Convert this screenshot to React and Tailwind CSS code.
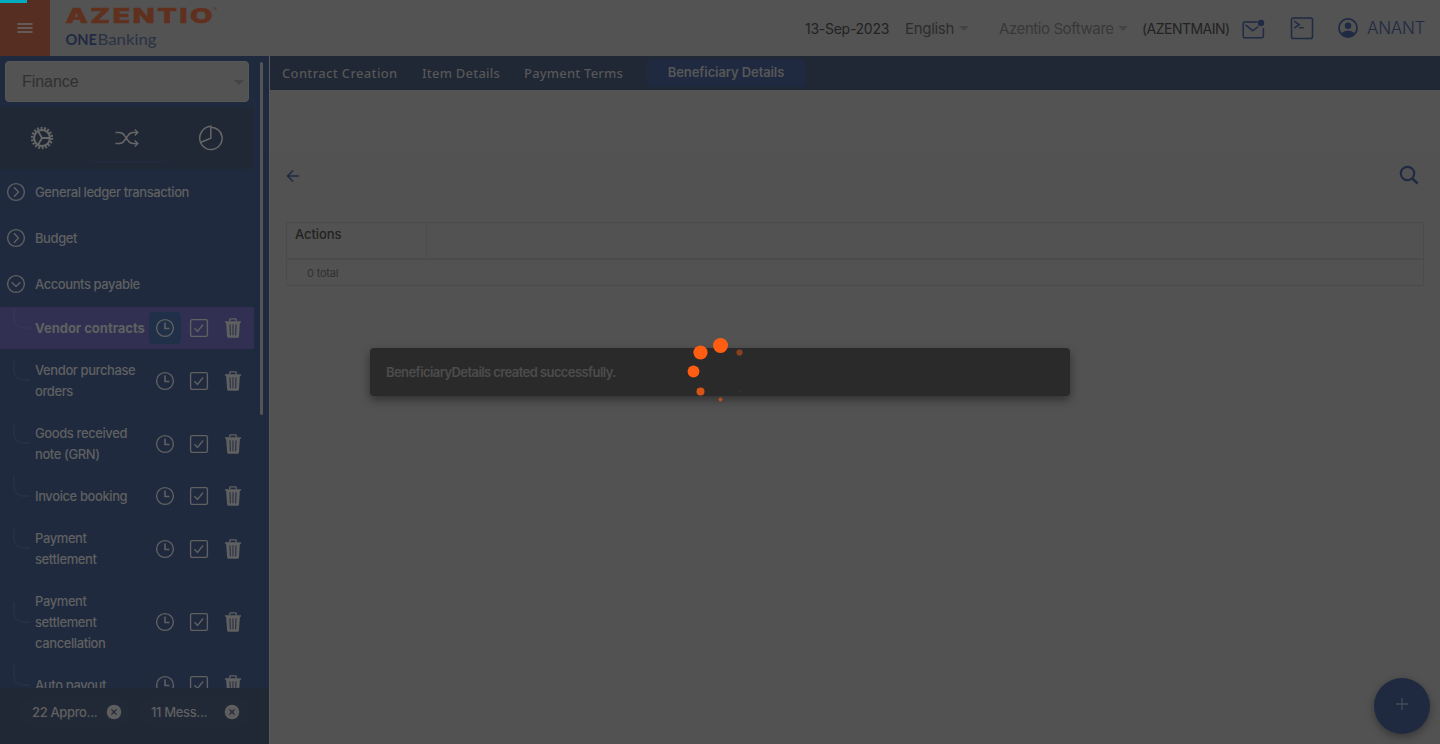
import React from "react";

const ITEMS = [
  { label: "Vendor contracts", active: true },
  { label: "Vendor purchase orders" },
  { label: "Goods received note (GRN)" },
  { label: "Invoice booking" },
  { label: "Payment settlement" },
  { label: "Payment settlement cancellation" },
  { label: "Auto payout" },
];

function Caret({ className }) {
  return (
    <svg width="10" height="5" viewBox="0 0 10 5" className={className}>
      <path d="M0 0h10L5 5z" fill="currentColor" />
    </svg>
  );
}

function Clock() {
  return (
    <svg width="20" height="20" viewBox="0 0 20 20" fill="none" stroke="currentColor" strokeWidth="1.4">
      <circle cx="10" cy="10" r="8.4" />
      <path d="M10 4.5v6h4.5" strokeWidth="1.6" />
    </svg>
  );
}

function Check() {
  return (
    <svg width="20" height="20" viewBox="0 0 20 20" fill="none" stroke="currentColor" strokeWidth="1.4">
      <rect x="1.6" y="1.6" width="16.8" height="16.8" rx="1.6" />
      <path d="M5.5 10.2l3 3.3 5.6-7" />
    </svg>
  );
}

function Trash() {
  return (
    <svg width="18" height="20" viewBox="0 0 18 20" fill="none">
      <path d="M1 3.2h16v1.500h-1.100L15 18.200q-.1 1.600-1.600 1.600H4.700q-1.500 0-1.600-1.600L2.100 4.700H1z" fill="currentColor" />
      <path d="M5.800 3.300V1.600q0-.7.7-.7h5q.7 0 .7.7v1.700" stroke="currentColor" strokeWidth="1.400" />
      <path d="M6 6.300l.3 11M9 6.300v11M12 6.300l-.3 11" stroke="#202a3f" strokeWidth="1" />
    </svg>
  );
}

function Group({ label, open }) {
  return (
    <div className="flex h-[46px] shrink-0 items-center pl-[6px]">
      <svg width="20" height="20" viewBox="0 0 20 20" fill="none" stroke="currentColor" strokeWidth="1.4">
        <circle cx="10" cy="10" r="8.4" />
        {open ? <path d="M5.500 8.200L10 12.200l4.500-4" /> : <path d="M8 5.300l4.500 4.700L8 14.700" />}
      </svg>
      <span className="ml-[9px] pt-px text-[13px] font-medium tracking-[-0.42px]">{label}</span>
    </div>
  );
}

function Item({ label, active }) {
  return (
    <div className={"flex w-[254px] shrink-0 items-center py-[10.5px] " + (active ? "bg-[#313053]" : "")}>
      <div className={"ml-[13px] mr-[5px] h-[21px] w-[17px] -translate-y-[10px] rounded-bl-[10px] border-b-2 border-l-2 " + (active ? "border-[#363456]" : "border-[#263044]")} />
      <div
        className={
          "w-[113px] text-[13px] leading-[21px] " +
          (active ? "whitespace-nowrap font-bold tracking-[-0.01px]" : "pr-[6px] font-medium tracking-[-0.4px]")
        }
      >
        {label}
      </div>
      <div className="-my-2 ml-px flex items-center">
        <span className={"flex size-8 items-center justify-center rounded-[4px] " + (active ? "bg-[#213049]" : "")}>
          <Clock />
        </span>
        <span className="ml-2 mr-[15px] flex"><Check /></span>
        <Trash />
      </div>
    </div>
  );
}

function Chip({ label, className }) {
  return (
    <div className={"flex h-8 items-center rounded-full bg-[#212937] " + className}>
      <span className="pt-px text-[13px] font-medium tracking-[-0.35px]">{label}</span>
      <svg width="16" height="16" viewBox="0 0 16 16" className="ml-auto">
        <circle cx="8" cy="8" r="7.300" fill="#5e5e5e" />
        <path d="M5.400 5.400l5.200 5.200M10.600 5.400l-5.200 5.200" stroke="#202735" strokeWidth="1.3" />
      </svg>
    </div>
  );
}

function Gear() {
  return (
    <svg width="24" height="24" viewBox="-12 -12 24 24" fill="none" stroke="currentColor">
      <circle r="10" strokeWidth="2.400" strokeDasharray="1.900 1.591" />
      <circle r="8" strokeWidth="2.200" />
      <path d="M0 0H8M0 0L-4 -7M0 0L-4 7" strokeWidth="1.800" />
    </svg>
  );
}

export default function App() {
  return (
    <div className="relative flex h-[744px] w-[1440px] flex-col overflow-hidden bg-[#525252] font-['Inter',sans-serif]">
      <header className="flex h-14 shrink-0 items-center bg-[#535353]">
        <div className="flex h-14 w-[50px] items-center justify-center bg-[#572e22] text-[#6a6a6a]">
          <svg width="16" height="12" viewBox="0 0 16 12" stroke="currentColor" strokeWidth="1.500" strokeLinecap="round">
            <path d="M1 2h14M1 6h14M1 10h14" />
          </svg>
        </div>
        <svg width="160" height="56" viewBox="0 0 160 56" className="ml-[10px]">
          <text transform="translate(5.500 22.800) scale(1.420 1)" textLength="103.500" lengthAdjust="spacing" fill="#60301f" stroke="#60301f" strokeWidth="0.600" fontFamily="Inter" fontWeight="800" fontSize="20.500">AZENTIO</text>
          <text x="152" y="10" textLength="5" lengthAdjust="spacingAndGlyphs" fill="#60301f" fontFamily="Inter" fontSize="3.500">TM</text>
          <text x="5.500" y="45" textLength="31.500" lengthAdjust="spacingAndGlyphs" fill="#202a43" fontFamily="Lato" fontWeight="700" fontSize="15.500">ONE</text>
          <text x="37.500" y="45" textLength="59" lengthAdjust="spacingAndGlyphs" fill="#2a3243" fontFamily="Lato" fontSize="16">Banking</text>
        </svg>
        <div className="ml-auto flex items-center whitespace-nowrap">
          <span className="w-[100px] text-[14px] tracking-[-0.27px] text-[#222]">13-Sep-2023</span>
          <span className="w-[55px] pt-0.5 text-[15px] tracking-[-0.3px] text-[#2c2c2c]">English</span>
          <Caret className="-ml-px mr-[30px] mt-px text-[#444]" />
          <span className="w-[120px] pt-0.5 text-[15px] tracking-[-0.42px] text-[#383838]">Azentio Software</span>
          <Caret className="-ml-px mr-[14px] mt-px text-[#444]" />
          <span className="w-[100px] text-[14px] tracking-[-0.52px] text-[#222]">(AZENTMAIN)</span>
          <svg width="24" height="22" viewBox="0 0 24 22" fill="none" stroke="#202a43" strokeWidth="1.500" className="mr-[24px] translate-y-px">
            <path d="M15.500 4H2.800Q1.200 4 1.200 5.600v12.600q0 1.600 1.600 1.600h17q1.600 0 1.600-1.600V10" />
            <path d="M3.500 6.800l7.300 6 5.400-4.300" />
            <circle cx="19" cy="5" r="3.200" fill="#202a43" stroke="none" />
          </svg>
          <svg width="24" height="24" viewBox="0 0 24 24" fill="none" stroke="#202a43" strokeWidth="1.500" className="mr-[23px]">
            <rect x="1.500" y="2" width="21" height="20.500" rx="1.800" />
            <path d="M4.200 5.200l5 3.500-5 3.500M9.200 11.700h4.500" />
          </svg>
          <svg width="22" height="22" viewBox="0 0 22 22" className="mr-[8px]">
            <circle cx="11" cy="11" r="9.100" fill="none" stroke="#202a43" strokeWidth="1.700" />
            <circle cx="11" cy="8.800" r="3.300" fill="#202a43" />
            <path d="M4.500 16.300q2.500-2.800 6.500-2.800t6.500 2.800q-2.500 3.200-6.500 3.200t-6.500-3.200z" fill="#202a43" />
          </svg>
          <span className="w-[73px] pt-0.5 text-[17px] font-light tracking-[-0.3px] text-[#202a43]">ANANT</span>
        </div>
      </header>

      <div className="flex min-h-0 flex-1">
        <aside className="relative flex w-[270px] shrink-0 flex-col border-r border-[#5a5a5a] bg-[#1f2a3f] text-[#606060]">
          <div className="ml-[5px] mt-[5px] flex h-[41px] w-[244px] shrink-0 items-center justify-between rounded-[4px] border border-[#585858] bg-[#535353] pl-4 pr-1 text-[#303030]">
            <span className="font-['Liberation_Sans',sans-serif] text-[16px] tracking-[-0.05px]">Finance</span>
            <Caret className="mt-px text-[#444]" />
          </div>
          <div className="mt-[5px] flex h-[62px] w-[254px] shrink-0 bg-[#202735] text-[#666]">
            <div className="flex flex-1 items-center justify-center"><Gear /></div>
            <div className="flex flex-1 items-center justify-center">
              <div className="flex h-full w-[76px] flex-col items-center justify-center">
                <svg width="24" height="20" viewBox="0 0 24 20" fill="none" stroke="currentColor" strokeWidth="1.400" className="mt-[21px]">
                  <path d="M.5 4.500h4Q7.500 4.500 9.500 7.500l3.500 5q2 3 5 3H23M.5 15.500h4q3 0 5-3l3.500-5q2-3 5-3H23M19.800 1.500l3 3-3 3M19.800 12.500l3 3-3 3" />
                </svg>
                <div className="mt-[13px] h-0.5 w-[76px] bg-[#1f2a3f]" />
                <div className="h-[6px]" />
              </div>
            </div>
            <div className="flex flex-1 items-center justify-center">
              <svg width="26" height="26" viewBox="0 0 26 26" fill="none" stroke="currentColor" strokeWidth="1.500" className="-translate-x-px">
                <path d="M12.800 2.200A11.200 11.200 0 1 1 2.500 17.400" />
                <path d="M12.800 1.200v12L2.500 17.400A12 12 0 0 1 12.800 1.200z" />
              </svg>
            </div>
          </div>
          <div className="flex min-h-0 flex-1 flex-col overflow-hidden">
            <Group label="General ledger transaction" />
            <Group label="Budget" />
            <Group label="Accounts payable" open />
            {ITEMS.map((it) => (
              <Item key={it.label} label={it.label} active={it.active} />
            ))}
          </div>
          <div className="flex h-14 shrink-0 items-start bg-[#202735] pl-5 pt-2">
            <Chip label="22 Appro..." className="w-[110px] pl-3 pr-2" />
            <Chip label="11 Mess..." className="ml-[9px] w-[110px] pl-3 pr-[9px]" />
          </div>
          <div className="absolute left-[260px] top-[6px] h-[353px] w-[3px] rounded-full bg-[#555]" />
        </aside>

        <main className="flex flex-1 flex-col">
          <nav className="flex h-[34px] items-center whitespace-nowrap bg-[#202735] pl-3 font-['Noto_Sans',sans-serif] text-[13px] font-medium tracking-[0.28px] text-[#575757]">
            <span className="w-[140px] pt-px tracking-[0.34px]">Contract Creation</span>
            <span className="w-[102px] pt-px tracking-[0.22px]">Item Details</span>
            <span className="w-[123px] pt-px tracking-[0.2px]">Payment Terms</span>
            <span className="flex h-7 w-[158px] items-center justify-center rounded-[4px] bg-[#1f2a41] pb-px font-['Inter'] font-semibold tracking-[-0.1px]">
              Beneficiary Details
            </span>
          </nav>
          <div className="h-[61px] bg-[#535353]" />
          <div className="flex h-12 items-center justify-between pl-[15px] pr-[20px]">
            <svg width="16" height="16" viewBox="0 0 16 16" fill="none" stroke="#202a43" strokeWidth="1.600" className="translate-y-px">
              <path d="M14 8H2.500M8 2.500L2.500 8 8 13.500" />
            </svg>
            <svg width="22" height="22" viewBox="0 0 22 22" fill="none" stroke="#202a43" strokeWidth="2.200">
              <circle cx="9.500" cy="9.500" r="6.700" />
              <path d="M14.300 14.300l5.300 5.300" strokeWidth="2.600" />
            </svg>
          </div>
          <section className="mx-4 mt-[23px] h-16 border border-[#4b4b4b]">
            <div className="flex h-[37px] border-b-2 border-[#4b4b4b]">
              <div className="w-[140px] border-r border-[#4b4b4b] pl-2 pt-[2px] text-[13px] font-medium leading-[18px] tracking-[-0.1px] text-[#222]">Actions</div>
            </div>
            <div className="pl-5 pt-[5px] text-[11px] leading-4 tracking-[-0.2px] text-[#303030]">0 total</div>
          </section>
        </main>
      </div>

      <div className="absolute left-0 top-0 h-[3px] w-[27px] bg-[#00acc1]" />
      <div className="absolute left-[370px] top-[348px] flex h-12 w-[700px] items-center rounded-[4px] bg-[#2a2a2a] pl-4 pt-px text-[13px] font-semibold tracking-[-0.58px] text-[#4c4c4c] shadow-[0_4px_10px_rgba(0,0,0,0.4)]">
        BeneficiaryDetails created successfully.
      </div>
      <div className="absolute left-[1374px] top-[678px] flex size-14 items-center justify-center rounded-full bg-[#1f2a41] shadow-[0_3px_9px_rgba(0,0,0,0.35)]">
        <svg width="14" height="14" viewBox="0 0 14 14" stroke="#464b55" strokeWidth="1.300" className="-translate-y-[2px]">
          <path d="M7 1v12M1 7h12" />
        </svg>
      </div>
      <svg className="absolute left-[680px] top-[332px]" width="80" height="80" viewBox="680 332 80 80" fill="#ff5e12">
        <circle cx="720.500" cy="345.500" r="7.500" />
        <circle cx="700.500" cy="352.500" r="7.100" />
        <circle cx="693.500" cy="371.500" r="5.900" />
        <circle cx="700.500" cy="391.500" r="4" opacity=".82" />
        <circle cx="720.500" cy="399.500" r="2" opacity=".6" />
        <circle cx="739.500" cy="352.500" r="3.100" opacity=".45" />
        <circle cx="739.500" cy="391.500" r=".6" opacity=".25" />
      </svg>
    </div>
  );
}
